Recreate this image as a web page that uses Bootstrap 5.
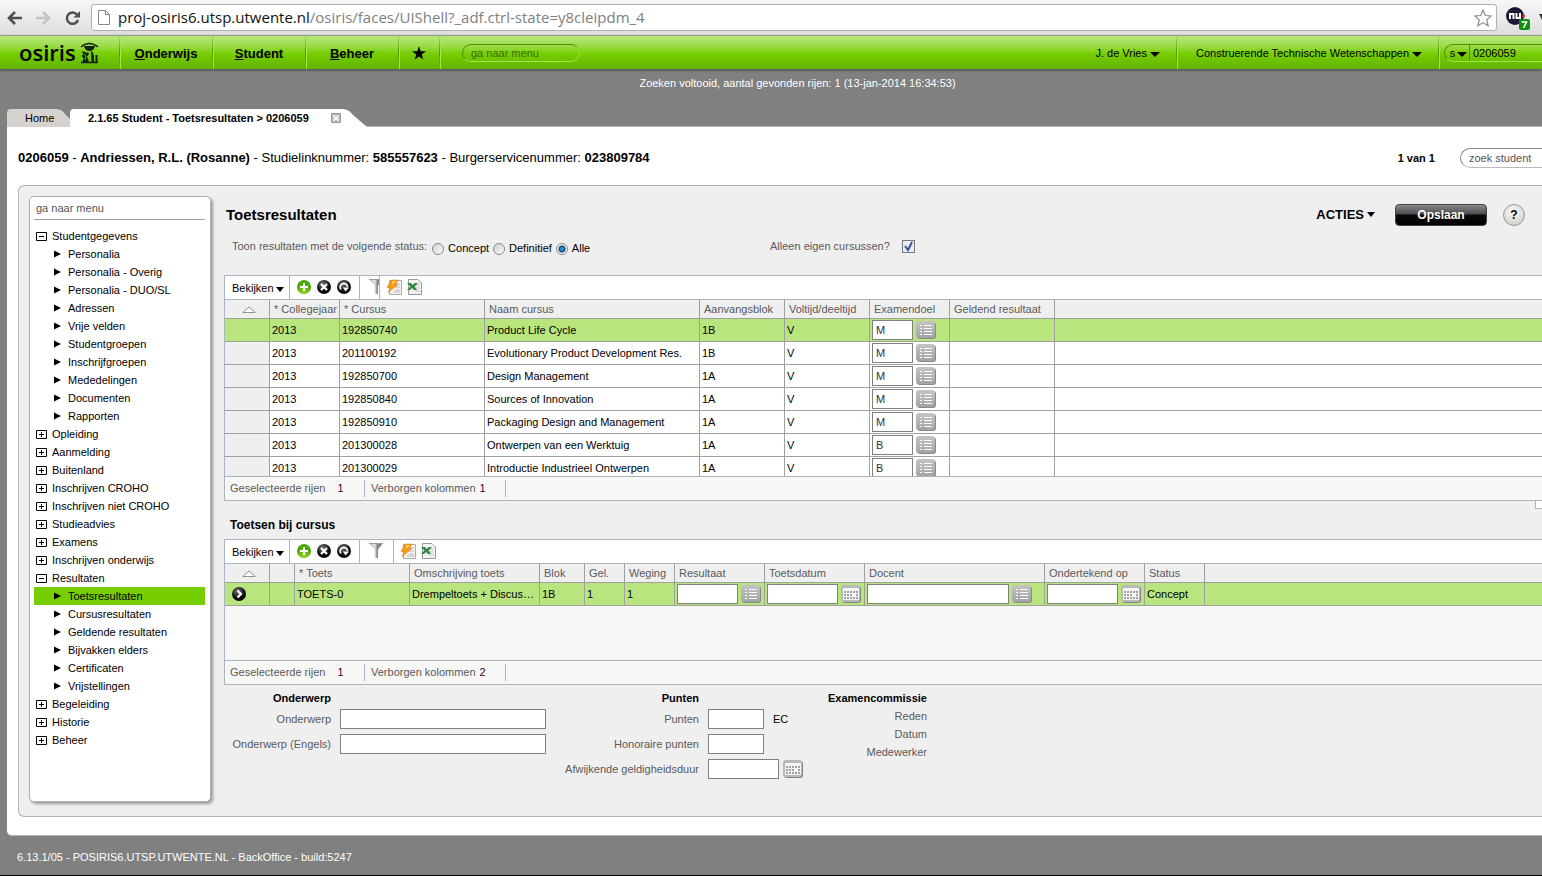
<!DOCTYPE html>
<html lang="nl">
<head>
<meta charset="utf-8">
<meta name="viewport" content="width=device-width, initial-scale=1">
<title>OSIRIS - Toetsresultaten</title>
<link href="https://cdn.jsdelivr.net/npm/bootstrap@5.3.0/dist/css/bootstrap.min.css" rel="stylesheet">
<style>
  :root { --line: #a0a0a0; --frame: #a9b4c5; --soft: #b4b4b4; --panel: #efefef; --green: #76cd00; --pick: #b9e57f; }
  body { font: 11px/18px "Liberation Sans", Arial, sans-serif; color: #000; background: #808080; overflow-x: hidden; }
  a { color: inherit; text-decoration: none; }
  svg { display: block; flex: none; }
  input { font: inherit; color: #333; min-width: 0; }
  input::placeholder { color: #555; opacity: 1; }
  .btn-flat { font: inherit; color: inherit; background: none; border: 0; padding: 0; }
  .dropdown-toggle::after { border-top: 5px solid; border-left: 5px solid transparent; border-right: 5px solid transparent; margin-left: 3px; vertical-align: 0; }

  /* browser bar */
  .browser-bar { height: 36px; padding-left: 7px; background: linear-gradient(#f7f7f7, #dedede); border-bottom: 1px solid #a5a5a5; overflow: hidden; }
  .url-box { height: 27px; margin-left: 10px; padding: 0 4px 0 6px; background: #fff; border: 1px solid #b0b0b0; border-radius: 3px; font: 15px/25px "Open Sans", sans-serif; color: #808080; }
  .url-box b { font-weight: 400; color: #111; }
  .browser-extras { width: 45px; padding-left: 9px; }

  /* green navigation bar */
  .top-bar { height: 33px; background: linear-gradient(#b7e87c 0, #9bdc49 30%, #76cd00 55%, #62b400 100%); box-shadow: 0 1px 3px #444; position: relative; }
  .brand { width: 119px; padding-left: 19px; font: 600 22px/33px "Open Sans", sans-serif; }
  .bar-cell { height: 33px; border-left: 1px solid #4f9c00; box-shadow: inset 1px 0 #a5e552; border-image: linear-gradient(transparent, #4f9c00 50%, transparent) 1; }
  .menu-item { width: 93px; font-size: 13px; font-weight: 700; padding-top: 2px; }
  .star-item { width: 41px; }
  .quick-menu { width: 118px; height: 18px; margin-left: 22px; padding: 0 8px; background: transparent; border: 1px solid; border-color: #4c8d0a #8fdc3a #9fe34f #4c8d0a; border-radius: 9px; }
  .quick-menu::placeholder { color: #3f6a10; }
  .user-cell { padding-right: 16px; }
  .faculty-cell { padding: 0 16px 0 19px; }
  .find-box { width: 98px; height: 18px; margin-left: 5px; border: 1px solid; border-color: #4c8d0a transparent #9fe34f #4c8d0a; border-right: 0; border-radius: 9px 0 0 9px; }
  .find-box .btn-flat { width: 25px; padding-left: 3px; border-right: 1px solid #4c8d0a; line-height: 16px; }
  .find-box .dropdown-toggle::after { margin-left: 2px; }
  .find-box input { width: 68px; background: none; border: 0; padding: 0 3px; color: #000; }

  /* message and tabs */
  .message { height: 40px; padding: 5px 0 0 53px; color: #fff; }
  .tab-row { padding-left: 7px; height: 17px; }
  .tab-item { height: 18px; border-radius: 4px 0 0 0; }
  .tab-home { width: 47px; background: #d6d3ce; padding-left: 18px; }
  .tab-open { position: relative; margin-left: -9px; }
  .tab-open .tab-item { width: 271px; background: #fff; padding-left: 18px; font-weight: 700; }

  /* page */
  .page-body { margin-left: 7px; background: #fff; border-top: 1px solid var(--soft); border-bottom: 1px solid var(--soft); border-bottom-left-radius: 5px; padding: 0 0 18px 11px; }
  .context-row { height: 58px; padding-top: 3px; }
  .student-line { font-size: 13px; }
  .page-count { font-weight: 700; margin-right: 25px; }
  .student-find { width: 82px; height: 20px; padding: 0 8px; border: 1px solid #888; border-bottom-color: #bbb; border-right: 0; border-radius: 10px 0 0 10px; }
  .work-panel { background: var(--panel); border: 1px solid var(--soft); border-right: 0; border-radius: 6px 0 0 6px; padding-left: 10px; }
  .side-menu { width: 182px; flex: none; margin: 10px 0 14px; padding: 0 5px 0 4px; background: #fff; border: 1px solid #aab2bd; border-radius: 5px; box-shadow: 2px 2px 3px #999; }
  .side-menu input { display: block; width: 171px; height: 23px; padding: 0 2px; border: 0; border-bottom: 1px solid var(--line); margin: 0 0 7px; background: none; }
  .side-menu a { display: flex; align-items: center; gap: 5px; height: 18px; padding-left: 2px; }
  .side-menu .leaf { padding-left: 20px; gap: 7px; }
  .side-menu .active { background: #76cd00; }
  .work-area { flex: 1; min-width: 0; margin-left: 13px; padding: 18px 0 32px; }
  .title-row { height: 22px; padding-left: 2px; padding-right: 17px; }
  .title-row h1 { font-size: 15px; font-weight: 700; margin: 0; line-height: 22px; }
  .actions { font-size: 13px; font-weight: 700; margin-right: 20px; }
  .actions.dropdown-toggle::after { border-left-width: 4px; border-right-width: 4px; vertical-align: 2px; }
  .save-btn { width: 92px; height: 22px; margin-right: 16px; font-size: 12px; font-weight: 700; color: #fff; background: linear-gradient(#8a8a8a, #4c4c4c 45%, #0a0a0a 50%, #000); border: 1px solid #444; border-radius: 4px; padding: 0; }
  .help-btn { width: 22px; height: 22px; font-weight: 700; font-size: 12px; line-height: 20px; background: radial-gradient(circle at 45% 35%, #fbfaf8, #c9c5bd); border: 1px solid #999; border-radius: 50%; padding: 0; }
  .filter-row { height: 20px; margin: 11px 0 18px; padding-left: 8px; }
  .muted-label { color: #5a5a5a; }
  .status-set { width: 538px; gap: 5px; }
  .status-options { padding-top: 2px; gap: 4px; }
  .status-set .form-check-input { width: 12px; height: 12px; margin: 1px 4px 0 0; border: 1px solid #8a8a8a; background: linear-gradient(135deg, #ccc, #fff); float: none; }
  .status-set .form-check-input:checked { background: radial-gradient(circle, #2c9be0 0 1px, #14446c 3px, #eee 4px); }
  .own-check.form-check-input { width: 13px; height: 13px; margin: 0 0 0 12px; border: 1px solid #777; border-radius: 0; background: #e8ecf4 url("data:image/svg+xml,%3Csvg xmlns='http://www.w3.org/2000/svg' viewBox='0 0 11 11'%3E%3Cpath d='M2 5l3 4 4-8' fill='none' stroke='%233c4f9c' stroke-width='2'/%3E%3C/svg%3E") center/11px no-repeat; }

  /* data grids */
  .grid-box { border: 1px solid var(--frame); border-right: 0; }
  .grid-tools { height: 23px; background: #fff; }
  .tool-cell { height: 23px; border-right: 1px solid var(--frame); flex: none; overflow: hidden; }
  .grid-tools .btn-flat svg { margin-bottom: 2px; }
  .view-cell { width: 65px; padding-left: 7px; }
  .view-cell .dropdown-toggle::after { border-left-width: 4px; border-right-width: 4px; margin-left: 2px; }
  .edit-cell { width: 70px; padding-left: 7px; gap: 6px; }
  .cut-cell { width: 20px; padding-left: 9px; }
  .sieve-cell { width: 34px; padding-left: 9px; }
  .export-cell { padding-left: 6px; gap: 5px; }
  .grid-body { border-top: 1px solid var(--frame); border-bottom: 1px solid var(--frame); overflow: hidden; background: #f7f7f5; }
  .results { height: 178px; }
  .tests { height: 98px; }
  .data-grid { table-layout: fixed; border-collapse: separate; border-spacing: 0; margin: 0; }
  .data-grid th, .data-grid td { border: 0 solid var(--line); border-width: 0 1px 1px 0; box-shadow: none; padding: 0 2px; white-space: nowrap; overflow: hidden; text-overflow: ellipsis; background: #fff; color: #000; vertical-align: middle; }
  .data-grid th { height: 19px; line-height: 18px; padding: 0 0 0 4px; font-weight: 400; color: #5a5a5a; background: var(--panel); }
  .data-grid td { height: 23px; line-height: 22px; }
  .data-grid td:first-child { background: var(--panel); padding-left: 7px; }
  .data-grid .picked td { background: var(--pick); }
  .data-grid th:last-child, .data-grid td:last-child { border-right: 0; }
  .entry { height: 20px; border: 1px solid #808080; background: #fff; padding: 0 3px; }
  .w-41 { width: 41px; } .w-56 { width: 56px; } .w-61 { width: 61px; } .w-71 { width: 71px; } .w-142 { width: 142px; } .w-206 { width: 206px; }
  .pair { display: flex; align-items: center; gap: 3px; }
  .grid-foot { height: 23px; background: #f7f7f5; padding-left: 5px; color: #5a5a5a; }
  .grid-foot output { color: #303; }
  .foot-one, .foot-two { height: 17px; line-height: 16px; border-right: 1px solid var(--frame); }
  .foot-one { width: 135px; } .foot-one output { margin-left: 9px; }
  .foot-two { width: 141px; padding-left: 6px; } .foot-two output { margin-left: 4px; }
  .splitter { width: 7px; height: 8px; background: #fff; border: 1px solid var(--soft); border-top: 0; border-right: 0; }
  .sub-title { font-size: 12px; font-weight: 700; margin: 0; padding: 16px 0 5px 6px; line-height: 17px; }

  /* detail form */
  .detail-form { padding-top: 4px; }
  .detail-form h3 { font-size: 11px; font-weight: 700; line-height: 18px; margin: 0 0 2px; text-align: right; }
  .field-line { height: 20px; margin-bottom: 5px; gap: 9px; }
  .field-line .name { color: #5a5a5a; text-align: right; }
  .subject .name, .subject h3 { width: 107px; }
  .subject { width: 322px; }
  .points { width: 262px; } .points .name, .points h3 { width: 153px; }
  .points .pair { gap: 4px; }
  .board { width: 119px; text-align: right; color: #5a5a5a; line-height: 18px; }
  .board h3 { color: #000; margin: 0; }
  .page-foot { height: 41px; padding: 12px 0 0 17px; color: #fff; border-bottom: 2px solid #000; }
</style>
</head>
<body>
<svg width="0" height="0" class="position-absolute" aria-hidden="true">
  <defs>
    <linearGradient id="gBtn" x2="0" y2="1"><stop stop-color="#c4c4c4"/><stop offset="1" stop-color="#a4a4a4"/></linearGradient>
    <radialGradient id="gGreen" cx=".5" cy=".8"><stop stop-color="#8be01c"/><stop offset="1" stop-color="#4ea60a"/></radialGradient>
    <radialGradient id="gDark" cx=".4" cy=".3"><stop stop-color="#777"/><stop offset="1" stop-color="#0a0a0a"/></radialGradient>
    <linearGradient id="gSieve"><stop stop-color="#a8a8a8"/><stop offset=".42" stop-color="#e6e6e6"/><stop offset=".58" stop-color="#8a8a8a"/><stop offset="1" stop-color="#777"/></linearGradient>
  </defs>
  <symbol id="add" viewBox="0 0 14 14"><circle cx="7" cy="7" r="7" fill="url(#gGreen)"/><path d="M7 3v8M3 7h8" stroke="#fff" stroke-width="2"/></symbol>
  <symbol id="del" viewBox="0 0 14 14"><circle cx="7" cy="7" r="7" fill="url(#gDark)"/><path d="M4 4l6 6M10 4l-6 6" stroke="#fff" stroke-width="2.2"/></symbol>
  <symbol id="undo" viewBox="0 0 14 14"><circle cx="7" cy="7" r="7" fill="url(#gDark)"/><path d="M4 9.500A3.700 3.700 0 1 1 10.500 7" stroke="#fff" stroke-width="1.600" fill="none"/><path d="M6 7.500h6L8.500 11.500z" fill="#fff"/></symbol>
  <symbol id="go" viewBox="0 0 14 14"><circle cx="7" cy="7" r="7" fill="url(#gDark)"/><path d="M5.500 3.500L9 7l-3.500 3.500" stroke="#fff" stroke-width="2.200" fill="none"/></symbol>
  <symbol id="sieve" viewBox="0 0 14 15"><path d="M0 0h14L9 6.500V15H5.500V6.500z" fill="url(#gSieve)"/><path d="M0 .5h14" stroke="#999"/></symbol>
  <symbol id="bolt" viewBox="0 0 16 16"><path d="M3.500 1.500h12v14h-12z" fill="#f3f3ef" stroke="#aaa"/><path d="M9 5h5M9 8h5M9 11h5M7 13h7" stroke="#bbb"/><path d="M5 1h7L9.500 5.500H12L2 13.500 4.500 8.500H1z" fill="#f79a13" stroke="#d97a08" stroke-width=".5"/><path d="M6 2h4L6 6z" fill="#ffd257"/></symbol>
  <symbol id="xls" viewBox="0 0 15 16"><path d="M1.500.5H11L14.500 4v11.500h-13z" fill="#f2f2f2" stroke="#999"/><path d="M8 6h5M8 9h5M8 12h5" stroke="#c4c4c4"/><path d="M0 4h4l1.500 2L8 4h3L7.500 7.500 10 11H7L5 9l-2 2H0l3.500-3.500z" fill="#2d8a3e"/></symbol>
  <symbol id="list" viewBox="0 0 20 18"><rect x="1" y="1" width="19" height="17" rx="3" fill="#8a8a8a"/><rect width="19" height="17" rx="3" fill="url(#gBtn)"/><path d="M4 4.500h2M4 7.500h2M4 10.500h2M4 13.500h2M8 4.500h8M8 7.500h8M8 10.500h8M8 13.500h8" stroke="#fff" stroke-width="1"/></symbol>
  <symbol id="cal" viewBox="0 0 20 18"><rect x="1" y="1" width="19" height="17" rx="3" fill="#858585"/><rect width="19" height="17" rx="3" fill="#b9b9b9"/><rect x="2" y="3" width="16" height="12" rx="1" fill="#f5f5f5"/><path d="M3 7h14M3 10h8m4 0h2M3 13h14" stroke="#a2a2a2" stroke-width="2" stroke-dasharray="2 1"/></symbol>
  <symbol id="plus" viewBox="0 0 11 11"><path d="M.5 1.500h10v8H.5zM3 5.500h5M5.500 3v5" fill="none" stroke="#000"/></symbol>
  <symbol id="minus" viewBox="0 0 11 11"><path d="M.5 1.500h10v8H.5zM3 5.500h5" fill="none" stroke="#000"/></symbol>
  <symbol id="tri" viewBox="0 0 7 8"><path d="M0 .5l7 3.500-7 3.500z"/></symbol>
  <symbol id="sort" viewBox="0 0 14 7"><path d="M.8 6.500L7 1l6.200 5.500z" fill="#fff" stroke="#777" stroke-width=".8"/></symbol>
</svg>

<header>
  <div class="browser-bar d-flex align-items-center">
    <svg width="74" height="16" viewBox="0 0 74 16" fill="none"><path d="M15 8H2M8 2L2 8l6 6" stroke="#505050" stroke-width="2.600"/><path d="M29 8h13M36 2l6 6-6 6" stroke="#c4c4c4" stroke-width="2.600"/><path d="M70 4.500A5.700 5.700 0 1 0 71 10" stroke="#505050" stroke-width="2.500"/><path d="M73 1v6.500h-6.500z" fill="#505050"/></svg>
    <div class="url-box d-flex align-items-center flex-grow-1" role="textbox" aria-label="Adres">
      <svg width="12" height="15" viewBox="0 0 12 15" class="me-2"><path d="M.5.500h7l4 4v10H.500zM7.500.500v4h4" fill="#fff" stroke="#888"/></svg>
      <div class="flex-grow-1 text-nowrap"><b>proj-osiris6.utsp.utwente.nl</b>/osiris/faces/UIShell?_adf.ctrl-state=y8cleipdm_4</div>
      <svg width="18" height="18" viewBox="0 0 18 18"><path d="M9 1l2.300 5.500 5.900.500-4.500 3.900 1.400 5.800L9 13.600l-5.100 3.100 1.400-5.800L.8 7l5.900-.5z" fill="#fff" stroke="#888" stroke-width="1.200"/></svg>
    </div>
    <div class="browser-extras">
      <svg width="36" height="24" viewBox="0 0 36 24"><circle cx="9" cy="10" r="9" fill="#1d1838"/><path d="M4 13V8h3.500v5M10.500 7v5H14V7" fill="none" stroke="#fff" stroke-width="2"/><circle cx="17.500" cy="10" r="1.500" fill="#e22"/><rect x="13" y="13" width="11" height="11" rx="2" fill="#0d910d"/><path d="M15.500 16h5l-3 6" fill="none" stroke="#fff" stroke-width="1.600"/><path d="M33 8h3v6z" fill="#333"/></svg>
    </div>
  </div>
  <nav class="top-bar d-flex align-items-center">
    <a href="#" class="brand d-flex align-items-center gap-1">osiris
      <svg width="19" height="22" viewBox="0 0 19 22"><path d="M1 5Q9 -2 18 5" fill="none" stroke="#121" stroke-width="1.500"/><path d="M4 4h11q-1 5-5.500 5T4 4z" fill="#121"/><path d="M1.500 9.500h3l2 1.500 1.500-1 1 2-2 2.500 2 5.500H2.500l1-4-2-2 2-2zM11 10l1-1 1 2 1 3v6h-2.500zM15.500 13h2v7h-2z" fill="#121"/><path d="M4 12l2 2-1 4" fill="none" stroke="#7c2" stroke-width=".8"/><path d="M1 20.500h17" stroke="#121" stroke-width="1.500"/></svg>
    </a>
    <a href="#" class="bar-cell menu-item d-flex align-items-center justify-content-center"><span><u>O</u>nderwijs</span></a>
    <a href="#" class="bar-cell menu-item d-flex align-items-center justify-content-center"><span><u>S</u>tudent</span></a>
    <a href="#" class="bar-cell menu-item d-flex align-items-center justify-content-center"><span><u>B</u>eheer</span></a>
    <a href="#" class="bar-cell star-item d-flex align-items-center justify-content-center" aria-label="Favorieten"><svg width="14" height="14" viewBox="0 0 14 14"><path d="M7 0l1.700 5.200H14L9.700 8.400l1.600 5.200L7 10.400l-4.300 3.200 1.600-5.200L0 5.200h5.300z"/></svg></a>
    <div class="bar-cell d-flex align-items-center flex-grow-1"><input type="text" class="quick-menu" placeholder="ga naar menu" aria-label="ga naar menu"></div>
    <div class="user-cell"><button type="button" class="btn-flat dropdown-toggle">J. de Vries</button></div>
    <div class="bar-cell faculty-cell d-flex align-items-center"><button type="button" class="btn-flat dropdown-toggle text-nowrap">Construerende Technische Wetenschappen</button></div>
    <div class="bar-cell d-flex align-items-center"><div class="find-box d-flex align-items-center"><button type="button" class="btn-flat dropdown-toggle" aria-label="Zoek op studentnummer">s</button><input type="text" value="0206059" aria-label="Studentnummer"></div></div>
  </nav>
</header>

<div class="message text-center" role="status">Zoeken voltooid, aantal gevonden rijen: 1 (13-jan-2014 16:34:53)</div>

<div class="tab-row d-flex">
  <a href="#" class="d-flex"><span class="tab-item tab-home">Home</span><svg width="25" height="18" viewBox="0 0 25 18"><path d="M0 0c7 0 9 2 12 6l13 12H0z" fill="#d6d3ce"/></svg></a>
  <div class="tab-open d-flex">
    <div class="tab-item d-flex align-items-center justify-content-between"><a href="#">2.1.65 Student - Toetsresultaten &gt; 0206059</a>
      <button type="button" class="btn-flat" aria-label="Tab sluiten"><svg width="10" height="10" viewBox="0 0 10 10"><path d="M.5.500h9v9h-9z" fill="#bbb" stroke="#999"/><path d="M2.500 2.500l5 5M7.500 2.500l-5 5" stroke="#fff" stroke-width="1.600"/></svg></button></div>
    <svg width="26" height="18" viewBox="0 0 26 18"><path d="M0 0c6 0 9 2 12 6l14 12H0z" fill="#fff"/></svg>
  </div>
</div>

<main class="page-body">
  <div class="context-row d-flex align-items-center">
    <div class="student-line flex-grow-1"><b>0206059</b> - <b>Andriessen, R.L. (Rosanne)</b> - Studielinknummer: <b>585557623</b> - Burgerservicenummer: <b>023809784</b></div>
    <span class="page-count">1 van 1</span>
    <input type="text" class="student-find" placeholder="zoek student" aria-label="zoek student">
  </div>

  <div class="work-panel d-flex">
    <nav class="side-menu">
      <input type="text" placeholder="ga naar menu" aria-label="ga naar menu">
      <a href="#"><svg width="11" height="11"><use href="#minus"/></svg>Studentgegevens</a>
      <a href="#" class="leaf"><svg width="7" height="8"><use href="#tri"/></svg>Personalia</a>
      <a href="#" class="leaf"><svg width="7" height="8"><use href="#tri"/></svg>Personalia - Overig</a>
      <a href="#" class="leaf"><svg width="7" height="8"><use href="#tri"/></svg>Personalia - DUO/SL</a>
      <a href="#" class="leaf"><svg width="7" height="8"><use href="#tri"/></svg>Adressen</a>
      <a href="#" class="leaf"><svg width="7" height="8"><use href="#tri"/></svg>Vrije velden</a>
      <a href="#" class="leaf"><svg width="7" height="8"><use href="#tri"/></svg>Studentgroepen</a>
      <a href="#" class="leaf"><svg width="7" height="8"><use href="#tri"/></svg>Inschrijfgroepen</a>
      <a href="#" class="leaf"><svg width="7" height="8"><use href="#tri"/></svg>Mededelingen</a>
      <a href="#" class="leaf"><svg width="7" height="8"><use href="#tri"/></svg>Documenten</a>
      <a href="#" class="leaf"><svg width="7" height="8"><use href="#tri"/></svg>Rapporten</a>
      <a href="#"><svg width="11" height="11"><use href="#plus"/></svg>Opleiding</a>
      <a href="#"><svg width="11" height="11"><use href="#plus"/></svg>Aanmelding</a>
      <a href="#"><svg width="11" height="11"><use href="#plus"/></svg>Buitenland</a>
      <a href="#"><svg width="11" height="11"><use href="#plus"/></svg>Inschrijven CROHO</a>
      <a href="#"><svg width="11" height="11"><use href="#plus"/></svg>Inschrijven niet CROHO</a>
      <a href="#"><svg width="11" height="11"><use href="#plus"/></svg>Studieadvies</a>
      <a href="#"><svg width="11" height="11"><use href="#plus"/></svg>Examens</a>
      <a href="#"><svg width="11" height="11"><use href="#plus"/></svg>Inschrijven onderwijs</a>
      <a href="#"><svg width="11" height="11"><use href="#minus"/></svg>Resultaten</a>
      <a href="#" class="leaf active" aria-current="page"><svg width="7" height="8"><use href="#tri"/></svg>Toetsresultaten</a>
      <a href="#" class="leaf"><svg width="7" height="8"><use href="#tri"/></svg>Cursusresultaten</a>
      <a href="#" class="leaf"><svg width="7" height="8"><use href="#tri"/></svg>Geldende resultaten</a>
      <a href="#" class="leaf"><svg width="7" height="8"><use href="#tri"/></svg>Bijvakken elders</a>
      <a href="#" class="leaf"><svg width="7" height="8"><use href="#tri"/></svg>Certificaten</a>
      <a href="#" class="leaf"><svg width="7" height="8"><use href="#tri"/></svg>Vrijstellingen</a>
      <a href="#"><svg width="11" height="11"><use href="#plus"/></svg>Begeleiding</a>
      <a href="#"><svg width="11" height="11"><use href="#plus"/></svg>Historie</a>
      <a href="#"><svg width="11" height="11"><use href="#plus"/></svg>Beheer</a>
    </nav>

    <section class="work-area">
      <div class="title-row d-flex align-items-center">
        <h1 class="flex-grow-1">Toetsresultaten</h1>
        <button type="button" class="btn-flat actions dropdown-toggle">ACTIES</button>
        <button type="submit" class="save-btn" form="detail">Opslaan</button>
        <button type="button" class="help-btn" aria-label="Help">?</button>
      </div>

      <div class="filter-row d-flex align-items-start">
        <div class="status-set d-flex align-items-start" role="radiogroup" aria-labelledby="statusLabel">
          <span id="statusLabel" class="muted-label">Toon resultaten met de volgende status:</span>
          <div class="status-options d-flex align-items-center">
            <label class="d-flex align-items-center"><input class="form-check-input" type="radio" name="status">Concept</label>
            <label class="d-flex align-items-center"><input class="form-check-input" type="radio" name="status">Definitief</label>
            <label class="d-flex align-items-center"><input class="form-check-input" type="radio" name="status" checked>Alle</label>
          </div>
        </div>
        <label class="d-flex align-items-center muted-label">Alleen eigen cursussen?<input class="form-check-input own-check" type="checkbox" checked></label>
      </div>

      <div class="grid-box">
        <div class="grid-tools d-flex">
          <div class="tool-cell view-cell d-flex align-items-center"><button type="button" class="btn-flat dropdown-toggle">Bekijken</button></div>
          <div class="tool-cell edit-cell d-flex align-items-center">
            <button type="button" class="btn-flat" aria-label="Toevoegen"><svg width="14" height="14"><use href="#add"/></svg></button>
            <button type="button" class="btn-flat" aria-label="Verwijderen"><svg width="14" height="14"><use href="#del"/></svg></button>
            <button type="button" class="btn-flat" aria-label="Ongedaan maken"><svg width="14" height="14"><use href="#undo"/></svg></button>
          </div>
          <div class="tool-cell cut-cell d-flex align-items-center"><button type="button" class="btn-flat" aria-label="Filter"><svg width="14" height="15"><use href="#sieve"/></svg></button></div>
          <div class="export-cell d-flex align-items-center">
            <button type="button" class="btn-flat" aria-label="Snelle export"><svg width="16" height="16"><use href="#bolt"/></svg></button>
            <button type="button" class="btn-flat" aria-label="Naar Excel"><svg width="15" height="16"><use href="#xls"/></svg></button>
          </div>
        </div>
        <div class="grid-body results">
          <table class="table data-grid">
            <colgroup><col width="45"><col width="70"><col width="145"><col width="215"><col width="85"><col width="85"><col width="80"><col width="105"><col></colgroup>
            <thead><tr><th aria-label="Sorteren"><svg width="14" height="7" class="mx-auto"><use href="#sort"/></svg></th><th>* Collegejaar</th><th>* Cursus</th><th>Naam cursus</th><th>Aanvangsblok</th><th>Voltijd/deeltijd</th><th>Examendoel</th><th>Geldend resultaat</th><th></th></tr></thead>
            <tbody>
              <tr class="picked"><td></td><td>2013</td><td>192850740</td><td>Product Life Cycle</td><td>1B</td><td>V</td><td><div class="pair"><input class="entry w-41" value="M" aria-label="Examendoel"><button type="button" class="btn-flat" aria-label="Kies examendoel"><svg width="20" height="18"><use href="#list"/></svg></button></div></td><td></td><td></td></tr>
              <tr><td></td><td>2013</td><td>201100192</td><td>Evolutionary Product Development Res.</td><td>1B</td><td>V</td><td><div class="pair"><input class="entry w-41" value="M" aria-label="Examendoel"><button type="button" class="btn-flat" aria-label="Kies examendoel"><svg width="20" height="18"><use href="#list"/></svg></button></div></td><td></td><td></td></tr>
              <tr><td></td><td>2013</td><td>192850700</td><td>Design Management</td><td>1A</td><td>V</td><td><div class="pair"><input class="entry w-41" value="M" aria-label="Examendoel"><button type="button" class="btn-flat" aria-label="Kies examendoel"><svg width="20" height="18"><use href="#list"/></svg></button></div></td><td></td><td></td></tr>
              <tr><td></td><td>2013</td><td>192850840</td><td>Sources of Innovation</td><td>1A</td><td>V</td><td><div class="pair"><input class="entry w-41" value="M" aria-label="Examendoel"><button type="button" class="btn-flat" aria-label="Kies examendoel"><svg width="20" height="18"><use href="#list"/></svg></button></div></td><td></td><td></td></tr>
              <tr><td></td><td>2013</td><td>192850910</td><td>Packaging Design and Management</td><td>1A</td><td>V</td><td><div class="pair"><input class="entry w-41" value="M" aria-label="Examendoel"><button type="button" class="btn-flat" aria-label="Kies examendoel"><svg width="20" height="18"><use href="#list"/></svg></button></div></td><td></td><td></td></tr>
              <tr><td></td><td>2013</td><td>201300028</td><td>Ontwerpen van een Werktuig</td><td>1A</td><td>V</td><td><div class="pair"><input class="entry w-41" value="B" aria-label="Examendoel"><button type="button" class="btn-flat" aria-label="Kies examendoel"><svg width="20" height="18"><use href="#list"/></svg></button></div></td><td></td><td></td></tr>
              <tr><td></td><td>2013</td><td>201300029</td><td>Introductie Industrieel Ontwerpen</td><td>1A</td><td>V</td><td><div class="pair"><input class="entry w-41" value="B" aria-label="Examendoel"><button type="button" class="btn-flat" aria-label="Kies examendoel"><svg width="20" height="18"><use href="#list"/></svg></button></div></td><td></td><td></td></tr>
            </tbody>
          </table>
        </div>
        <div class="grid-foot d-flex align-items-center"><div class="foot-one">Geselecteerde rijen <output>1</output></div><div class="foot-two">Verborgen kolommen<output>1</output></div></div>
      </div>

      <div class="d-flex align-items-start"><h2 class="sub-title flex-grow-1">Toetsen bij cursus</h2><div class="splitter"></div></div>

      <div class="grid-box">
        <div class="grid-tools d-flex">
          <div class="tool-cell view-cell d-flex align-items-center"><button type="button" class="btn-flat dropdown-toggle">Bekijken</button></div>
          <div class="tool-cell edit-cell d-flex align-items-center">
            <button type="button" class="btn-flat" aria-label="Toevoegen"><svg width="14" height="14"><use href="#add"/></svg></button>
            <button type="button" class="btn-flat" aria-label="Verwijderen"><svg width="14" height="14"><use href="#del"/></svg></button>
            <button type="button" class="btn-flat" aria-label="Ongedaan maken"><svg width="14" height="14"><use href="#undo"/></svg></button>
          </div>
          <div class="tool-cell sieve-cell d-flex align-items-center"><button type="button" class="btn-flat" aria-label="Filter"><svg width="14" height="15"><use href="#sieve"/></svg></button></div>
          <div class="export-cell d-flex align-items-center">
            <button type="button" class="btn-flat" aria-label="Snelle export"><svg width="16" height="16"><use href="#bolt"/></svg></button>
            <button type="button" class="btn-flat" aria-label="Naar Excel"><svg width="15" height="16"><use href="#xls"/></svg></button>
          </div>
        </div>
        <div class="grid-body tests">
          <table class="table data-grid">
            <colgroup><col width="45"><col width="25"><col width="115"><col width="130"><col width="45"><col width="40"><col width="50"><col width="90"><col width="100"><col width="180"><col width="100"><col width="60"><col></colgroup>
            <thead><tr><th aria-label="Sorteren"><svg width="14" height="7" class="mx-auto"><use href="#sort"/></svg></th><th></th><th>* Toets</th><th>Omschrijving toets</th><th>Blok</th><th>Gel.</th><th>Weging</th><th>Resultaat</th><th>Toetsdatum</th><th>Docent</th><th>Ondertekend op</th><th>Status</th><th></th></tr></thead>
            <tbody>
              <tr class="picked">
                <td><svg width="14" height="14"><use href="#go"/></svg></td><td></td><td>TOETS-0</td><td>Drempeltoets + Discussie</td><td>1B</td><td>1</td><td>1</td>
                <td><div class="pair"><input class="entry w-61" aria-label="Resultaat"><button type="button" class="btn-flat" aria-label="Kies resultaat"><svg width="20" height="18"><use href="#list"/></svg></button></div></td>
                <td><div class="pair"><input class="entry w-71" aria-label="Toetsdatum"><button type="button" class="btn-flat" aria-label="Kies toetsdatum"><svg width="20" height="18"><use href="#cal"/></svg></button></div></td>
                <td><div class="pair"><input class="entry w-142" aria-label="Docent"><button type="button" class="btn-flat" aria-label="Kies docent"><svg width="20" height="18"><use href="#list"/></svg></button></div></td>
                <td><div class="pair"><input class="entry w-71" aria-label="Ondertekend op"><button type="button" class="btn-flat" aria-label="Kies datum"><svg width="20" height="18"><use href="#cal"/></svg></button></div></td>
                <td>Concept</td><td></td>
              </tr>
            </tbody>
          </table>
        </div>
        <div class="grid-foot d-flex align-items-center"><div class="foot-one">Geselecteerde rijen <output>1</output></div><div class="foot-two">Verborgen kolommen<output>2</output></div></div>
      </div>

      <form id="detail" class="detail-form d-flex">
        <div class="subject">
          <h3>Onderwerp</h3>
          <div class="field-line d-flex align-items-center"><label class="name" for="onderwerp">Onderwerp</label><input id="onderwerp" class="entry w-206"></div>
          <div class="field-line d-flex align-items-center"><label class="name" for="onderwerpEn">Onderwerp (Engels)</label><input id="onderwerpEn" class="entry w-206"></div>
        </div>
        <div class="points">
          <h3>Punten</h3>
          <div class="field-line d-flex align-items-center"><label class="name" for="punten">Punten</label><input id="punten" class="entry w-56"><span>EC</span></div>
          <div class="field-line d-flex align-items-center"><label class="name" for="honorair">Honoraire punten</label><input id="honorair" class="entry w-56"></div>
          <div class="field-line d-flex align-items-center"><label class="name" for="duur">Afwijkende geldigheidsduur</label><div class="pair"><input id="duur" class="entry w-71"><button type="button" class="btn-flat" aria-label="Kies datum"><svg width="20" height="18"><use href="#cal"/></svg></button></div></div>
        </div>
        <div class="board"><h3>Examencommissie</h3><div>Reden</div><div>Datum</div><div>Medewerker</div></div>
      </form>
    </section>
  </div>
</main>

<footer class="page-foot">6.13.1/05 - POSIRIS6.UTSP.UTWENTE.NL - BackOffice - build:5247</footer>
<script src="https://cdn.jsdelivr.net/npm/bootstrap@5.3.0/dist/js/bootstrap.bundle.min.js"></script>
</body>
</html>
